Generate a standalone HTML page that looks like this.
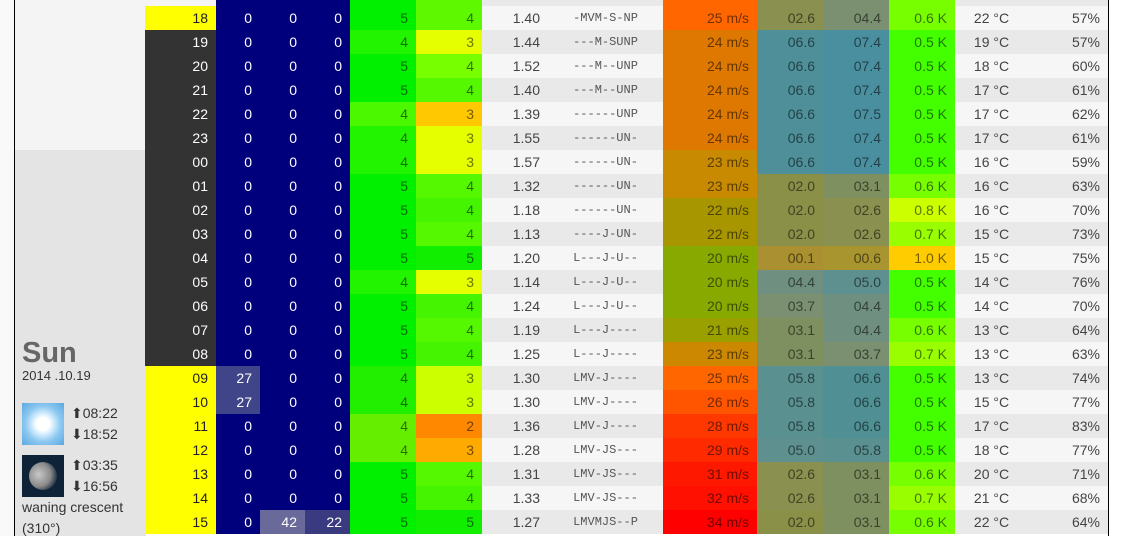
<!DOCTYPE html>
<html><head><meta charset="utf-8">
<style>
html,body{margin:0;padding:0;width:1134px;height:536px;overflow:hidden;background:#fff;font-family:"Liberation Sans",Arial,sans-serif;}
#left{position:absolute;left:0;top:0;width:14px;height:536px;background:#f9f9f9;}
#panel{position:absolute;left:14px;top:0;width:131px;height:536px;border-left:1px solid #000;background:#e4e4e4;}
#panel .top{position:absolute;left:0;top:0;width:131px;height:150px;background:#f4f4f4;}
#rb{position:absolute;left:1108px;top:0;width:1px;height:536px;background:#000;}
table{position:absolute;left:145px;top:-18px;border-collapse:collapse;table-layout:fixed;font-size:14px;}
td{height:24px;padding:0 8px 0 0;text-align:right;color:rgba(0,0,0,0.55);white-space:nowrap;overflow:hidden;}
td.h{color:#222}
tr.d td.h{background:#333;color:#fff}
tr td.h{background:#ff0}
td.b{background:#00007c;color:#fff}
td.c{font-family:"Liberation Mono",monospace;font-size:12px;text-align:center;padding:0;color:#555;letter-spacing:0}
td.t{text-align:center;padding:0;color:#444}
td.n,td.p{color:#444}
tr.o td.n,tr.o td.c,tr.o td.t,tr.o td.p{background:#f6f6f6}
tr.e td.n,tr.e td.c,tr.e td.t,tr.e td.p{background:#e9e9e9}
.sun{font-size:29px;font-weight:bold;color:#666;position:absolute;left:7px;top:337px}
.date{position:absolute;left:7px;top:368px;font-size:13px;color:#333}
.ic{position:absolute;left:7px;width:42px;height:42px}
.tm{position:absolute;left:56px;font-size:14px;color:#333;line-height:21px}
.ph{position:absolute;left:7px;font-size:14px;color:#333}
</style></head><body>
<div id="left"></div>
<div id="panel"><div class="top"></div>
<div class="sun">Sun</div>
<div class="date">2014 .10.19</div>
<div class="ic" style="top:403px;background:radial-gradient(circle at 50% 50%,#fff 0,#fff 22%,#d8efff 34%,#8cc8f0 60%,#5aa8e0 100%)"></div>
<div class="tm" style="top:403px">&#x2B06;08:22<br>&#x2B07;18:52</div>
<div class="ic" style="top:455px;background:#0e2238"><div style="position:absolute;left:7px;top:7px;width:28px;height:28px;border-radius:50%;background:radial-gradient(circle at 35% 45%,#c8c8c8 0,#8a8a8a 50%,#2a3a4a 75%)"></div></div>
<div class="tm" style="top:455px">&#x2B06;03:35<br>&#x2B07;16:56</div>
<div class="ph" style="top:499px">waning crescent</div>
<div class="ph" style="top:520px">(310°)</div>
</div>
<table>
<colgroup><col style="width:71px"><col style="width:44px"><col style="width:45px"><col style="width:45px"><col style="width:66px"><col style="width:66px"><col style="width:66px"><col style="width:115px"><col style="width:94px"><col style="width:66px"><col style="width:66px"><col style="width:66px"><col style="width:73px"><col style="width:80px"></colgroup>
<tr class="e"><td class="h" style="background:#f4f4f4"></td><td class="b">0</td><td class="b">0</td><td class="b">0</td><td style="background:#00f000">5</td><td style="background:#5ef800">4</td><td class="n">1.40</td><td class="c">-MVM-S-NP</td><td style="background:#ff6600">25 m/s</td><td style="background:#8a9050">02.6</td><td style="background:#7a9070">04.4</td><td style="background:#77ff00">0.6 K</td><td class="t">22 °C</td><td class="p">57%</td></tr>
<tr class="o"><td class="h">18</td><td class="b">0</td><td class="b">0</td><td class="b">0</td><td style="background:#00f000">5</td><td style="background:#5ef800">4</td><td class="n">1.40</td><td class="c">-MVM-S-NP</td><td style="background:#ff6600">25 m/s</td><td style="background:#8a9050">02.6</td><td style="background:#7a9070">04.4</td><td style="background:#77ff00">0.6 K</td><td class="t">22 °C</td><td class="p">57%</td></tr>
<tr class="e d"><td class="h">19</td><td class="b">0</td><td class="b">0</td><td class="b">0</td><td style="background:#22f400">4</td><td style="background:#e6ff00">3</td><td class="n">1.44</td><td class="c">---M-SUNP</td><td style="background:#de7800">24 m/s</td><td style="background:#4f8f99">06.6</td><td style="background:#4a8fa0">07.4</td><td style="background:#44ff00">0.5 K</td><td class="t">19 °C</td><td class="p">57%</td></tr>
<tr class="o d"><td class="h">20</td><td class="b">0</td><td class="b">0</td><td class="b">0</td><td style="background:#00f000">5</td><td style="background:#77ff00">4</td><td class="n">1.52</td><td class="c">---M--UNP</td><td style="background:#de7800">24 m/s</td><td style="background:#4f8f99">06.6</td><td style="background:#4a8fa0">07.4</td><td style="background:#44ff00">0.5 K</td><td class="t">18 °C</td><td class="p">60%</td></tr>
<tr class="e d"><td class="h">21</td><td class="b">0</td><td class="b">0</td><td class="b">0</td><td style="background:#00f000">5</td><td style="background:#55f800">4</td><td class="n">1.40</td><td class="c">---M--UNP</td><td style="background:#de7800">24 m/s</td><td style="background:#4f8f99">06.6</td><td style="background:#4a8fa0">07.4</td><td style="background:#44ff00">0.5 K</td><td class="t">17 °C</td><td class="p">61%</td></tr>
<tr class="o d"><td class="h">22</td><td class="b">0</td><td class="b">0</td><td class="b">0</td><td style="background:#4cf800">4</td><td style="background:#ffc800">3</td><td class="n">1.39</td><td class="c">------UNP</td><td style="background:#de7800">24 m/s</td><td style="background:#4f8f99">06.6</td><td style="background:#4a8fa0">07.5</td><td style="background:#44ff00">0.5 K</td><td class="t">17 °C</td><td class="p">62%</td></tr>
<tr class="e d"><td class="h">23</td><td class="b">0</td><td class="b">0</td><td class="b">0</td><td style="background:#22f400">4</td><td style="background:#e6ff00">3</td><td class="n">1.55</td><td class="c">------UN-</td><td style="background:#de7800">24 m/s</td><td style="background:#4f8f99">06.6</td><td style="background:#4a8fa0">07.4</td><td style="background:#44ff00">0.5 K</td><td class="t">17 °C</td><td class="p">61%</td></tr>
<tr class="o d"><td class="h">00</td><td class="b">0</td><td class="b">0</td><td class="b">0</td><td style="background:#22f400">4</td><td style="background:#e6ff00">3</td><td class="n">1.57</td><td class="c">------UN-</td><td style="background:#c88a00">23 m/s</td><td style="background:#4f8f99">06.6</td><td style="background:#4a8fa0">07.4</td><td style="background:#44ff00">0.5 K</td><td class="t">16 °C</td><td class="p">59%</td></tr>
<tr class="e d"><td class="h">01</td><td class="b">0</td><td class="b">0</td><td class="b">0</td><td style="background:#00f000">5</td><td style="background:#55f800">4</td><td class="n">1.32</td><td class="c">------UN-</td><td style="background:#c88a00">23 m/s</td><td style="background:#8a9048">02.0</td><td style="background:#7f9060">03.1</td><td style="background:#77ff00">0.6 K</td><td class="t">16 °C</td><td class="p">63%</td></tr>
<tr class="o d"><td class="h">02</td><td class="b">0</td><td class="b">0</td><td class="b">0</td><td style="background:#00f000">5</td><td style="background:#44f400">4</td><td class="n">1.18</td><td class="c">------UN-</td><td style="background:#a89600">22 m/s</td><td style="background:#8a9048">02.0</td><td style="background:#8a9050">02.6</td><td style="background:#ccff00">0.8 K</td><td class="t">16 °C</td><td class="p">70%</td></tr>
<tr class="e d"><td class="h">03</td><td class="b">0</td><td class="b">0</td><td class="b">0</td><td style="background:#00f000">5</td><td style="background:#55f800">4</td><td class="n">1.13</td><td class="c">----J-UN-</td><td style="background:#a89600">22 m/s</td><td style="background:#8a9048">02.0</td><td style="background:#8a9050">02.6</td><td style="background:#99ff00">0.7 K</td><td class="t">15 °C</td><td class="p">73%</td></tr>
<tr class="o d"><td class="h">04</td><td class="b">0</td><td class="b">0</td><td class="b">0</td><td style="background:#00f000">5</td><td style="background:#11ee00">5</td><td class="n">1.20</td><td class="c">L---J-U--</td><td style="background:#88aa00">20 m/s</td><td style="background:#aa9030">00.1</td><td style="background:#a89530">00.6</td><td style="background:#ffcc00">1.0 K</td><td class="t">15 °C</td><td class="p">75%</td></tr>
<tr class="e d"><td class="h">05</td><td class="b">0</td><td class="b">0</td><td class="b">0</td><td style="background:#22f400">4</td><td style="background:#e6ff00">3</td><td class="n">1.14</td><td class="c">L---J-U--</td><td style="background:#88aa00">20 m/s</td><td style="background:#6f9080">04.4</td><td style="background:#5f9090">05.0</td><td style="background:#44ff00">0.5 K</td><td class="t">14 °C</td><td class="p">76%</td></tr>
<tr class="o d"><td class="h">06</td><td class="b">0</td><td class="b">0</td><td class="b">0</td><td style="background:#00f000">5</td><td style="background:#44f400">4</td><td class="n">1.24</td><td class="c">L---J-U--</td><td style="background:#88aa00">20 m/s</td><td style="background:#7a9070">03.7</td><td style="background:#6f9080">04.4</td><td style="background:#44ff00">0.5 K</td><td class="t">14 °C</td><td class="p">70%</td></tr>
<tr class="e d"><td class="h">07</td><td class="b">0</td><td class="b">0</td><td class="b">0</td><td style="background:#00f000">5</td><td style="background:#55f800">4</td><td class="n">1.19</td><td class="c">L---J----</td><td style="background:#99a000">21 m/s</td><td style="background:#7f9060">03.1</td><td style="background:#6f9080">04.4</td><td style="background:#77ff00">0.6 K</td><td class="t">13 °C</td><td class="p">64%</td></tr>
<tr class="o d"><td class="h">08</td><td class="b">0</td><td class="b">0</td><td class="b">0</td><td style="background:#00f000">5</td><td style="background:#44f400">4</td><td class="n">1.25</td><td class="c">L---J----</td><td style="background:#cc8800">23 m/s</td><td style="background:#7f9060">03.1</td><td style="background:#7a9070">03.7</td><td style="background:#99ff00">0.7 K</td><td class="t">13 °C</td><td class="p">63%</td></tr>
<tr class="e"><td class="h">09</td><td class="b" style="background:#40458a">27</td><td class="b">0</td><td class="b">0</td><td style="background:#22ee00">4</td><td style="background:#ccff00">3</td><td class="n">1.30</td><td class="c">LMV-J----</td><td style="background:#ff6600">25 m/s</td><td style="background:#5a9090">05.8</td><td style="background:#509095">06.6</td><td style="background:#44ff00">0.5 K</td><td class="t">13 °C</td><td class="p">74%</td></tr>
<tr class="o"><td class="h">10</td><td class="b" style="background:#40458a">27</td><td class="b">0</td><td class="b">0</td><td style="background:#22ee00">4</td><td style="background:#ccff00">3</td><td class="n">1.30</td><td class="c">LMV-J----</td><td style="background:#ff5500">26 m/s</td><td style="background:#5a9090">05.8</td><td style="background:#509095">06.6</td><td style="background:#44ff00">0.5 K</td><td class="t">15 °C</td><td class="p">77%</td></tr>
<tr class="e"><td class="h">11</td><td class="b">0</td><td class="b">0</td><td class="b">0</td><td style="background:#66ee00">4</td><td style="background:#ff8800">2</td><td class="n">1.36</td><td class="c">LMV-J----</td><td style="background:#ff3800">28 m/s</td><td style="background:#5a9090">05.8</td><td style="background:#509095">06.6</td><td style="background:#44ff00">0.5 K</td><td class="t">17 °C</td><td class="p">83%</td></tr>
<tr class="o"><td class="h">12</td><td class="b">0</td><td class="b">0</td><td class="b">0</td><td style="background:#66ee00">4</td><td style="background:#ffaa00">3</td><td class="n">1.28</td><td class="c">LMV-JS---</td><td style="background:#ff2a00">29 m/s</td><td style="background:#5f9090">05.0</td><td style="background:#5a9090">05.8</td><td style="background:#44ff00">0.5 K</td><td class="t">18 °C</td><td class="p">77%</td></tr>
<tr class="e"><td class="h">13</td><td class="b">0</td><td class="b">0</td><td class="b">0</td><td style="background:#00f000">5</td><td style="background:#55f800">4</td><td class="n">1.31</td><td class="c">LMV-JS---</td><td style="background:#ff1800">31 m/s</td><td style="background:#8a9050">02.6</td><td style="background:#7f9060">03.1</td><td style="background:#77ff00">0.6 K</td><td class="t">20 °C</td><td class="p">71%</td></tr>
<tr class="o"><td class="h">14</td><td class="b">0</td><td class="b">0</td><td class="b">0</td><td style="background:#00f000">5</td><td style="background:#44f400">4</td><td class="n">1.33</td><td class="c">LMV-JS---</td><td style="background:#ff1000">32 m/s</td><td style="background:#8a9050">02.6</td><td style="background:#7f9060">03.1</td><td style="background:#99ff00">0.7 K</td><td class="t">21 °C</td><td class="p">68%</td></tr>
<tr class="e"><td class="h">15</td><td class="b">0</td><td class="b" style="background:#6a6a9a">42</td><td class="b" style="background:#3a3a80">22</td><td style="background:#00f000">5</td><td style="background:#11ee00">5</td><td class="n">1.27</td><td class="c">LMVMJS--P</td><td style="background:#ff0000">34 m/s</td><td style="background:#8a9048">02.0</td><td style="background:#7f9060">03.1</td><td style="background:#77ff00">0.6 K</td><td class="t">22 °C</td><td class="p">64%</td></tr>
</table>
<div id="rb"></div>
</body></html>
